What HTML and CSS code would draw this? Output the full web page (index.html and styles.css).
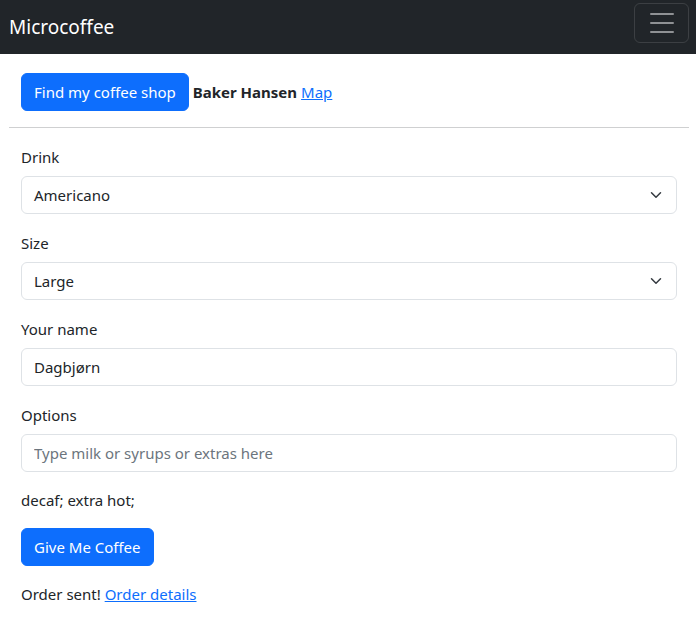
FILE: index.html
```html
<!DOCTYPE html>
<html lang="en">
<head>
<meta charset="utf-8">
<title>Microcoffee</title>
<link rel="stylesheet" href="styles.css">
</head>
<body>
<nav class="navbar">
  <a class="brand" href="#">Microcoffee</a>
  <button class="toggler" type="button" aria-label="Toggle navigation">
    <span class="bar"></span><span class="bar"></span><span class="bar"></span>
  </button>
</nav>
<main class="main">
  <div class="shop">
    <button class="btn" type="button">Find my coffee shop</button><strong class="shop-name">Baker Hansen</strong> <a href="#" class="link">Map</a>
  </div>
  <hr class="rule">
  <form class="form">
    <div class="field">
      <label class="label">Drink</label>
      <div class="select"><span>Americano</span><svg class="chev" viewBox="0 0 16 16" width="16" height="12"><path d="M2 5l6 6 6-6" fill="none" stroke="#343a40" stroke-width="2" stroke-linecap="round" stroke-linejoin="round"/></svg></div>
    </div>
    <div class="field">
      <label class="label">Size</label>
      <div class="select"><span>Large</span><svg class="chev" viewBox="0 0 16 16" width="16" height="12"><path d="M2 5l6 6 6-6" fill="none" stroke="#343a40" stroke-width="2" stroke-linecap="round" stroke-linejoin="round"/></svg></div>
    </div>
    <div class="field">
      <label class="label">Your name</label>
      <input class="input" type="text" value="Dagbjørn">
    </div>
    <div class="field">
      <label class="label">Options</label>
      <input class="input" type="text" placeholder="Type milk or syrups or extras here">
    </div>
    <p class="para">decaf; extra hot;</p>
    <button class="btn btn-block" type="button">Give Me Coffee</button>
    <p class="para status">Order sent! <a href="#" class="link">Order details</a></p>
  </form>
</main>
</body>
</html>
```

FILE: styles.css
```css
* { box-sizing: border-box; }
body {
  margin: 0;
  font-family: "Noto Sans", "Open Sans", sans-serif;
  font-size: 15px;
  line-height: 24px;
  color: #212529;
  background: #fff;
}
.navbar {
  height: 54px;
  background: #212529;
  display: flex;
  align-items: center;
  justify-content: space-between;
  padding: 0 7px 0 9px;
}
.brand {
  color: #fff;
  font-size: 19px;
  text-decoration: none;
  line-height: 30px;
}
.toggler {
  width: 55px;
  height: 40px;
  margin-top: -8px;
  background: transparent;
  border: 1px solid rgba(255,255,255,0.12);
  border-radius: 6px;
  display: flex;
  flex-direction: column;
  align-items: center;
  justify-content: center;
  gap: 7px;
  padding: 0;
}
.toggler .bar {
  display: block;
  width: 24px;
  height: 2px;
  background: #8f9194;
  border-radius: 1px;
}
.main {
  margin: 0 7px 0 9px;
}
.shop {
  padding: 19px 12px 0;
  display: flex;
  align-items: center;
  line-height: 24px;
}
.shop-name {
  font-weight: 700;
  margin-right: 4px;
  margin-left: 4px;
}
.btn {
  font-family: inherit;
  font-size: 15px;
  line-height: 24px;
  color: #fff;
  background: #0d6efd;
  border: 1px solid #0d6efd;
  border-radius: 6px;
  padding: 6px 12px;
  height: 38px;
}
.link {
  color: #0d6efd;
  text-decoration: underline;
}
.rule {
  margin: 16px 0;
  border: 0;
  border-top: 1px solid #cfd0d1;
}
.form {
  padding: 0 12px;
}
.field {
  margin-bottom: 16px;
}
.label {
  display: block;
  margin-bottom: 8px;
  padding-top: 1px;
  height: 24px;
}
.select, .input {
  display: flex;
  align-items: center;
  justify-content: space-between;
  width: 100%;
  height: 38px;
  border: 1px solid #dee2e6;
  border-radius: 6px;
  padding: 6px 12px;
  font-family: inherit;
  font-size: 15px;
  color: #212529;
  background: #fff;
}
.chev { display: block; }
.input::placeholder { color: #6c757d; }
.para {
  margin: 0 0 16px;
}
.status { margin-top: 16px; }
```
